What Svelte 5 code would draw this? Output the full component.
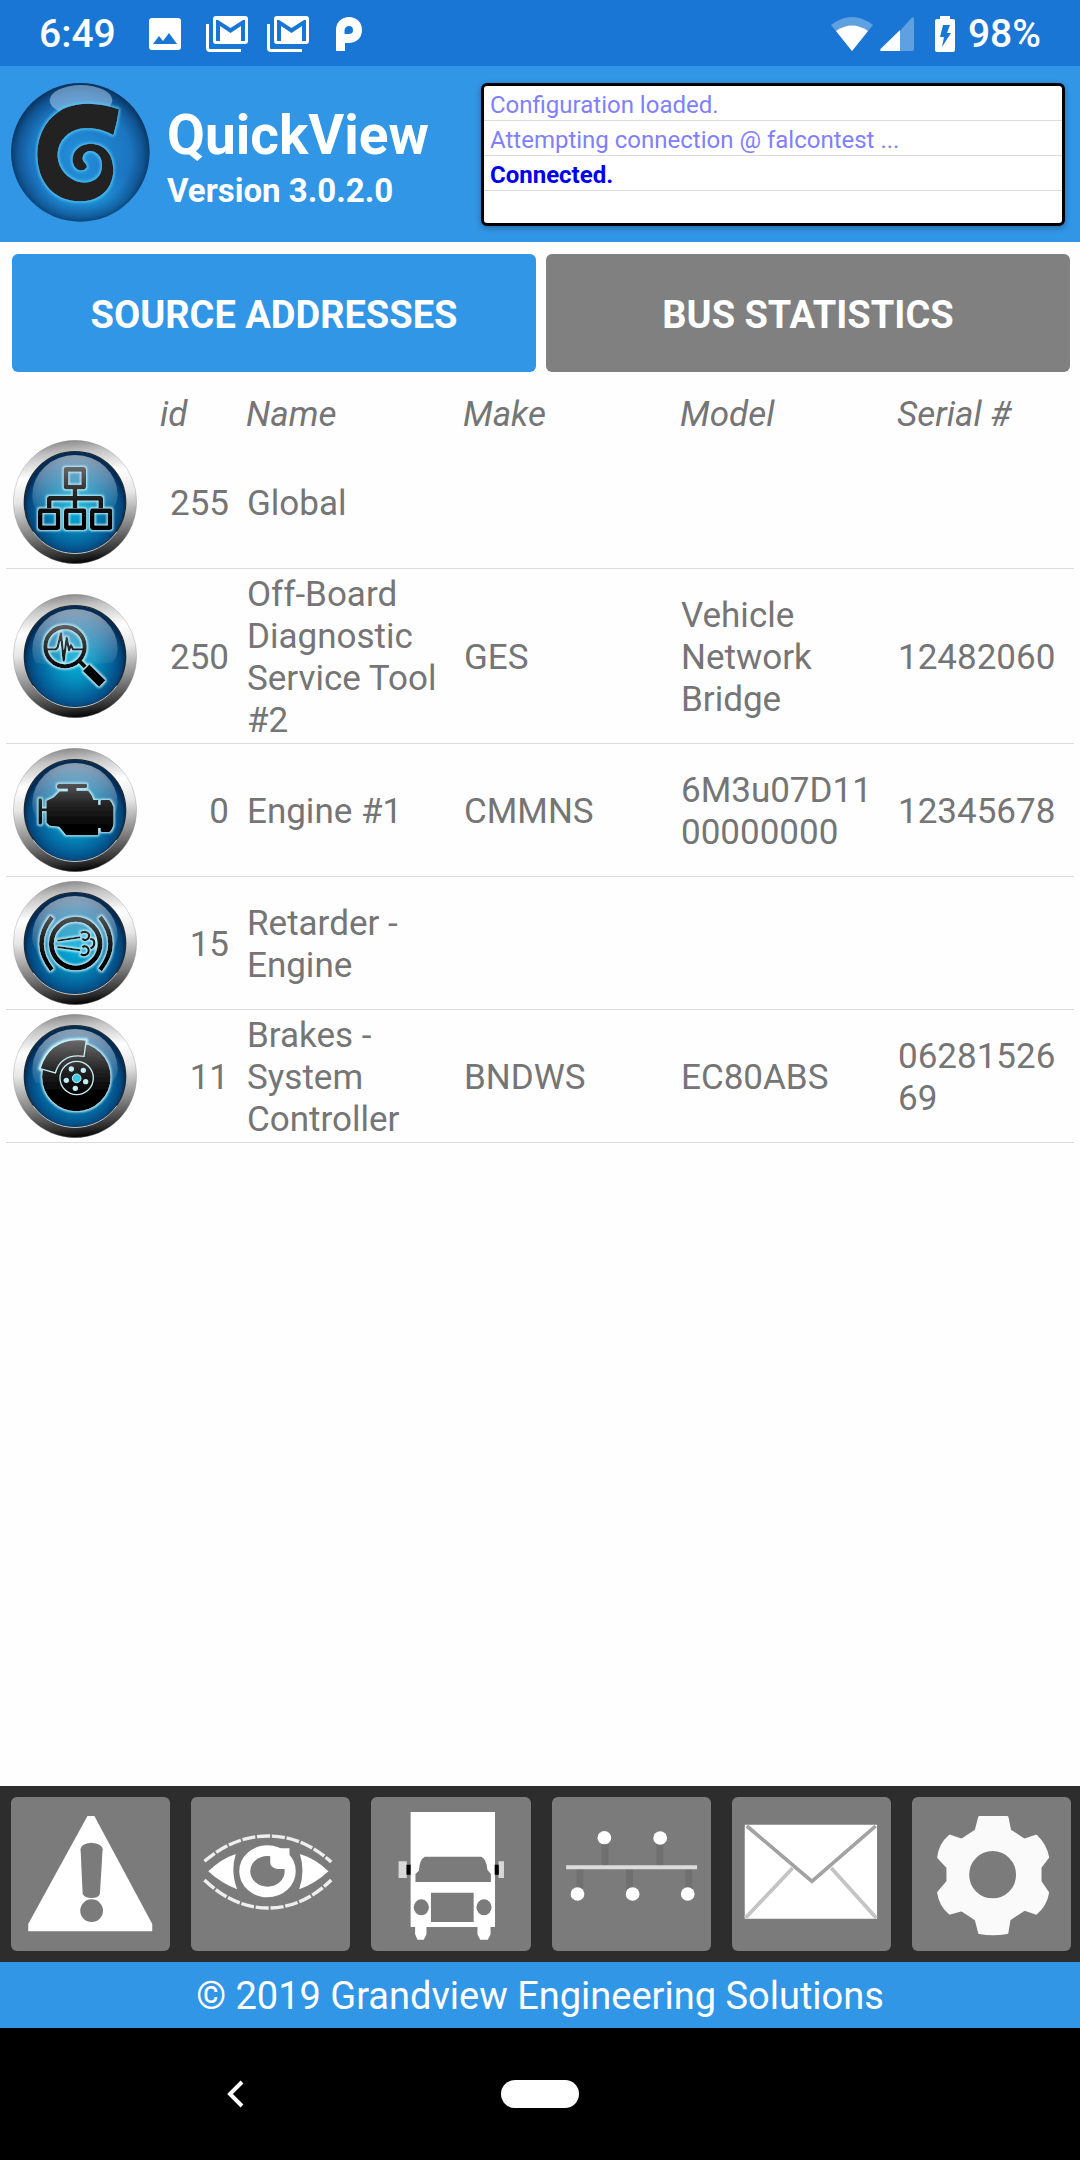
<script>
  const log = [
    { text: 'Configuration loaded.', current: false },
    { text: 'Attempting connection @ falcontest ...', current: false },
    { text: 'Connected.', current: true }
  ];

  const tabs = [
    { id: 'sources', label: 'SOURCE ADDRESSES' },
    { id: 'bus', label: 'BUS STATISTICS' }
  ];

  const sources = [
    { icon: 'network', id: 255, name: 'Global', make: '', model: '', serial: '' },
    {
      icon: 'tool',
      id: 250,
      name: 'Off-Board Diagnostic Service Tool #2',
      make: 'GES',
      model: 'Vehicle Network Bridge',
      serial: '12482060'
    },
    { icon: 'engine', id: 0, name: 'Engine #1', make: 'CMMNS', model: '6M3u07D1100000000', serial: '12345678' },
    { icon: 'retarder', id: 15, name: 'Retarder - Engine', make: '', model: '', serial: '' },
    { icon: 'brakes', id: 11, name: 'Brakes - System Controller', make: 'BNDWS', model: 'EC80ABS', serial: '0628152669' }
  ];

  const tools = [
    { id: 'faults', label: 'Faults', viewBox: '32 51 462 462' },
    { id: 'monitor', label: 'Monitor', viewBox: '558 51 462 462' },
    { id: 'vehicle', label: 'Vehicle', viewBox: '1080 51 462 462' },
    { id: 'bus', label: 'Network', viewBox: '35 51 462 462' },
    { id: 'mail', label: 'Messages', viewBox: '558 51 462 462' },
    { id: 'settings', label: 'Settings', viewBox: '1080 51 462 462' }
  ];

  let activeTab = 'sources';
</script>

<!-- shared gradients -->
<svg class="defs" aria-hidden="true">
  <defs>
    <linearGradient id="rim" x1="0.45" y1="0" x2="0.55" y2="1">
      <stop offset="0" stop-color="#8c8c8c" />
      <stop offset="0.1" stop-color="#c4c4c4" />
      <stop offset="0.28" stop-color="#ffffff" />
      <stop offset="0.46" stop-color="#e6e6e6" />
      <stop offset="0.75" stop-color="#7a7a7a" />
      <stop offset="0.92" stop-color="#303030" />
      <stop offset="1" stop-color="#000000" />
    </linearGradient>
    <radialGradient id="face" cx="0.5" cy="0.55" r="0.5">
      <stop offset="0" stop-color="#08b4dc" />
      <stop offset="0.4" stop-color="#058cbc" />
      <stop offset="0.75" stop-color="#045f98" />
      <stop offset="0.92" stop-color="#03447a" />
      <stop offset="1" stop-color="#022c56" />
    </radialGradient>
    <linearGradient id="shine" x1="0" y1="0" x2="0" y2="1">
      <stop offset="0" stop-color="#fff" stop-opacity="0.55" />
      <stop offset="1" stop-color="#fff" stop-opacity="0.05" />
    </linearGradient>
    <linearGradient id="ink" gradientUnits="userSpaceOnUse" x1="0" y1="70" x2="0" y2="240">
      <stop offset="0" stop-color="#707070" />
      <stop offset="0.6" stop-color="#222222" />
      <stop offset="1" stop-color="#000000" />
    </linearGradient>
    <filter id="glow" x="-20%" y="-20%" width="140%" height="140%">
      <feMorphology in="SourceAlpha" operator="dilate" radius="3" />
      <feGaussianBlur stdDeviation="3" result="soft" />
      <feFlood flood-color="#c4f4ff" />
      <feComposite in2="soft" operator="in" result="halo" />
      <feMerge>
        <feMergeNode in="halo" />
        <feMergeNode in="SourceGraphic" />
      </feMerge>
    </filter>
    <filter id="logo-glow" x="-20%" y="-20%" width="140%" height="140%">
      <feMorphology in="SourceAlpha" operator="dilate" radius="4" />
      <feGaussianBlur stdDeviation="5" result="soft" />
      <feFlood flood-color="#50c8f8" />
      <feComposite in2="soft" operator="in" result="halo" />
      <feMerge>
        <feMergeNode in="halo" />
        <feMergeNode in="SourceGraphic" />
      </feMerge>
    </filter>
    <radialGradient id="orb" cx="0.5" cy="0.52" r="0.52">
      <stop offset="0" stop-color="#2390dc" />
      <stop offset="0.7" stop-color="#1c74bf" />
      <stop offset="0.87" stop-color="#105694" />
      <stop offset="1" stop-color="#07305a" />
    </radialGradient>
    <radialGradient id="pool" cx="0.5" cy="0.5" r="0.5">
      <stop offset="0" stop-color="#1ec8ff" />
      <stop offset="1" stop-color="#1ea0e6" stop-opacity="0" />
    </radialGradient>
  </defs>
</svg>

<div class="screen">
  <div class="status-bar">
    <span class="clock">6:49</span>
    <div class="notifications">
      <svg width="32" height="34" viewBox="0 0 32 34">
        <path fill="#fff" fill-rule="evenodd" d="M3 1h26a3 3 0 0 1 3 3v26a3 3 0 0 1-3 3H3a3 3 0 0 1-3-3V4a3 3 0 0 1 3-3zM4 27h24l-8-11-6 8-4-5z" />
      </svg>
      {#each [1, 2] as n (n)}
        <svg width="42" height="36" viewBox="0 0 42 36">
          <path fill="none" stroke="#fff" stroke-width="3" d="M1.500 8v24q0 2.500 2.500 2.500h31" />
          <path fill="#fff" fill-rule="evenodd" d="M10 0h29a3 3 0 0 1 3 3v22a3 3 0 0 1-3 3H10a3 3 0 0 1-3-3V3a3 3 0 0 1 3-3zM10 4v21h4V10l10.500 7L35 10v15h4V4h-2L24.500 12 12 4z" />
        </svg>
      {/each}
      <svg width="28" height="36" viewBox="0 0 28 36">
        <path fill="#fff" fill-rule="evenodd" d="M1 35V14C1 6 7 1 14 1s13 5 13 13-6 13-13 13h-4v8zM14 10a4.500 4.500 0 0 0-4.500 4.500V18H14a4 4 0 0 0 0-8z" />
      </svg>
    </div>
    <div class="system">
      <svg width="42" height="34" viewBox="0 0 42 34">
        <path fill="#5fa0e0" d="M0 8Q21-8 42 8L21 34z" />
        <path fill="#fff" d="M5 14Q21 3 37 14L21 34z" />
      </svg>
      <svg width="34" height="34" viewBox="0 0 34 34">
        <path fill="#5fa0e0" d="M19 15 31.500 1Q34-1 34 2v30q0 2-2 2H19z" />
        <path fill="#fff" d="M20 13v21H1.500Q-1 34 1 31.500z" />
      </svg>
      <svg class="battery" width="20" height="36" viewBox="0 0 20 36">
        <path fill="#fff" fill-rule="evenodd" d="M5 0h10v3h3q2 0 2 2v29q0 2-2 2H2q-2 0-2-2V5q0-2 2-2h3zM8 9 5 21h4L7 31l9-14h-4l3-8z" />
      </svg>
      <span>98%</span>
    </div>
  </div>

  <header class="app-header">
    <svg class="logo" viewBox="18 18 417 417" aria-hidden="true">
      <circle cx="226" cy="226" r="208" fill="url(#orb)" />
      <ellipse cx="240" cy="350" rx="160" ry="80" fill="url(#pool)" opacity="0.5" />
      <ellipse cx="228" cy="70" rx="94" ry="46" fill="#a8cdf0" opacity="0.55" />
      <g filter="url(#logo-glow)">
        <path
          class="swirl"
          d="M342 97C290 78 225 72 175 95C120 125 95 180 97 240C100 320 150 373 225 373C290 373 326 330 325 275C323 225 293 200 256 200C215 202 198 232 204 258C210 282 235 288 246 270C244 256 232 256 233 243C235 225 252 218 267 224C290 233 298 265 285 292C270 318 232 325 200 305C165 285 152 245 160 215C170 178 203 156 238 154C270 152 300 160 325 175Q337 135 342 97z"
        />
      </g>
    </svg>
    <div class="app-title">
      <h1>QuickView</h1>
      <p>Version 3.0.2.0</p>
    </div>
    <ul class="log">
      {#each log as line (line.text)}
        <li class:current={line.current}>{line.text}</li>
      {/each}
    </ul>
  </header>

  <div class="tabs">
    {#each tabs as tab (tab.id)}
      <button class="tab" class:active={activeTab === tab.id} on:click={() => (activeTab = tab.id)}>
        {tab.label}
      </button>
    {/each}
  </div>

  <main>
    <table>
      <colgroup>
        <col class="col-icon" />
        <col class="col-id" />
        <col />
        <col />
        <col />
        <col class="col-serial" />
      </colgroup>
      <thead>
        <tr>
          <td></td>
          <th class="head-id">id</th>
          <th>Name</th>
          <th>Make</th>
          <th>Model</th>
          <th>Serial #</th>
        </tr>
      </thead>
      <tbody>
        {#each sources as source (source.id)}
          <tr>
            <td class="icon-cell">
              <svg class="badge" viewBox="0 0 372 372" aria-hidden="true">
                <circle cx="186" cy="186" r="185" fill="url(#rim)" stroke="#8a8a8a" stroke-width="1" />
                <circle cx="186" cy="187" r="152" fill="url(#face)" stroke="#1c2a34" stroke-width="4" />
                <path fill="none" stroke="#b9cbd6" stroke-width="3" d="M60 275A154 154 0 0 0 312 275" />
                <path fill="url(#shine)" d="M58 165A128 120 0 0 1 314 165Q312 195 296 206Q120 220 68 206Q58 190 58 165z" />
                <g filter="url(#glow)">
                  {#if source.icon === 'network'}
                    <g class="line" stroke-width="14" stroke-linejoin="round">
                      <rect x="159" y="88" width="53" height="53" />
                      <path d="M186 141v34M109 205v-30h154v30M186 175v30" />
                      <rect x="82" y="212" width="53" height="51" />
                      <rect x="160" y="212" width="53" height="51" />
                      <rect x="238" y="212" width="53" height="51" />
                    </g>
                  {:else if source.icon === 'tool'}
                    <g class="line">
                      <circle cx="156" cy="158" r="59" stroke-width="13" />
                      <path stroke-width="7" stroke-linejoin="round" d="M100 166h28l6-6 10-42 8 82 9-68 7 36 6-14 6 12h32" />
                      <path stroke-width="13" d="M197 199l20 20" />
                      <path stroke-width="28" d="M219 221l49 48" />
                    </g>
                  {:else if source.icon === 'engine'}
                    <path
                      fill="url(#ink)"
                      d="M136 107h82q4 0 4 4v5q0 4-4 4h-27v8h35q10 10 16 28h14v14h6v-11q0-3 4-3h24q8 8 12 22v50q-4 18-12 24h-24q-4 0-4-3v-9h-6v18q0 4-4 4h-93q-8-10-20-25l-30-4-9-9v-34h-13v36q0 4-4 4h-3q-4 0-4-4v-71q0-4 4-4h3q4 0 4 4v26h13v-23l22-10 18-18h24v-8h-28q-4 0-4-4v-5q0-4 4-4z"
                    />
                  {:else if source.icon === 'retarder'}
                    <g class="line">
                      <circle cx="188" cy="188" r="73" stroke-width="15" />
                      <path stroke-width="14" d="M117 108Q54 188 117 267M261 108Q324 188 261 267" />
                      <path stroke-width="6" d="M133 179l69-10M133 198l69 10" />
                      <path stroke-width="7" d="M203 156C216 148 230 155 228 166C226 178 212 180 208 172M208 199C216 192 228 198 227 210C225 222 212 226 203 219M231 175C247 170 249 196 232 202" />
                    </g>
                  {:else}
                    <circle cx="190" cy="189" r="103" fill="url(#ink)" />
                    <path fill="url(#ink)" stroke="#c5eef5" stroke-width="4" d="M81 164Q108 78 192 77Q210 76 220 78L213 127Q144 118 127 177z" />
                    <circle cx="191" cy="192" r="50" fill="none" stroke="#c5eef5" stroke-width="4" />
                    <g fill="#c5eef5">
                      <circle cx="175" cy="165" r="8" />
                      <circle cx="211" cy="169" r="8" />
                      <circle cx="218" cy="203" r="8" />
                      <circle cx="187" cy="223" r="8" />
                      <circle cx="160" cy="199" r="8" />
                    </g>
                    <circle cx="191" cy="193" r="13" fill="#3cc8e8" stroke="#c5eef5" stroke-width="3" />
                  {/if}
                </g>
              </svg>
            </td>
            <td class="id-cell">{source.id}</td>
            <td>{source.name}</td>
            <td>{source.make}</td>
            <td>{source.model}</td>
            <td>{source.serial}</td>
          </tr>
        {/each}
      </tbody>
    </table>
  </main>

  <nav class="toolbar">
    {#each tools as tool (tool.id)}
      <button class="tool" aria-label={tool.label}>
        <svg viewBox={tool.viewBox} preserveAspectRatio="none">
          {#if tool.id === 'faults'}
            <path fill="#fff" d="M254 108h20L442 432v22H82v-22z" />
            <path fill="#7b7b7b" d="M234 208q2-18 31-20 31 2 33 20l-8 134q-4 12-24 12t-26-12z" />
            <ellipse cx="266" cy="392" rx="33" ry="34" fill="#7b7b7b" />
          {:else if tool.id === 'monitor'}
            <g fill="none" stroke="#eee" stroke-width="10" stroke-dasharray="38 5">
              <path d="M597 244Q682 168 782 168T965 246" />
              <path d="M597 300Q682 384 782 384T965 300" />
            </g>
            <path fill="#fff" d="M608 274Q646 236 688 222Q672 274 692 328Q646 310 608 274zM957 274Q920 236 874 222Q890 274 872 328Q920 310 957 274z" />
            <ellipse cx="780" cy="274" rx="66" ry="62" fill="none" stroke="#fff" stroke-width="32" />
            <path fill="#fff" d="M788 205h56v62h-36q-20-4-20-20z" />
          {:else if tool.id === 'vehicle'}
            <path fill="#fff" d="M1195 96h245v345h-13v22l-8 16h-22l-8-16v-22h-148v22l-8 16h-18l-7-16v-22h-13z" />
            <path fill="#7b7b7b" d="M1236 230h164q16 8 18 40l10 12v24h-219v-24l10-10q2-36 17-42z" />
            <path fill="#7b7b7b" d="M1254 338h124v88h-124z" />
            <ellipse cx="1226" cy="382" rx="22" ry="24" fill="#7b7b7b" />
            <ellipse cx="1408" cy="382" rx="22" ry="24" fill="#7b7b7b" />
            <path fill="#d8d8d8" d="M1160 244h24v50h-24zM1450 244h16v50h-16z" />
            <path fill="#000" d="M1183 254h12v30h-12zM1439 254h12v30h-12z" />
          {:else if tool.id === 'bus'}
            <path stroke="#707070" stroke-width="20" d="M189 180v80M116 262v76M260 262v76M432 262v76M348 180v80" />
            <path stroke="#dcdcdc" stroke-width="12" d="M76 262h380" />
            <g fill="#fff">
              <circle cx="187" cy="173" r="20" />
              <circle cx="349" cy="174" r="20" />
              <circle cx="109" cy="342" r="20" />
              <circle cx="269" cy="342" r="20" />
              <circle cx="429" cy="342" r="20" />
            </g>
          {:else if tool.id === 'mail'}
            <path fill="#fff" d="M595 134h384v282H595z" />
            <g fill="none" stroke-width="11">
              <path stroke="#c4c4c4" d="M597 414L734 264M977 414L846 264" />
              <path stroke="#a2a2a2" d="M601 138L790 304L975 138" />
            </g>
          {:else}
            <path
              fill="#fafafa"
              fill-rule="evenodd"
              stroke="#fafafa"
              stroke-width="8"
              stroke-linejoin="round"
              d="M1276 112H1356L1364 152L1406 180L1440 168Q1468 196 1474 232L1452 262V305L1474 338Q1468 376 1440 400L1406 388L1362 418L1356 458Q1314 466 1276 458L1266 418L1224 390L1190 400Q1162 376 1157 338L1184 305V262L1157 232Q1162 192 1190 168L1224 180L1266 152zM1314 209A72 75 0 0 0 1314 359A72 75 0 0 0 1314 209z"
            />
          {/if}
        </svg>
      </button>
    {/each}
  </nav>

  <footer>© 2019 Grandview Engineering Solutions</footer>

  <div class="system-nav">
    <button class="back" aria-label="Back">
      <svg width="18" height="28" viewBox="0 0 18 28" fill="none" stroke="#fff" stroke-width="4">
        <path d="M16 2L4 14l12 12" />
      </svg>
    </button>
    <button class="home" aria-label="Home"></button>
  </div>
</div>

<style>
  :global(body) {
    margin: 0;
    background: #fefefe;
  }

  .defs {
    position: absolute;
    width: 0;
    height: 0;
  }

  .screen {
    display: flex;
    flex-direction: column;
    min-height: 100vh;
    font-family: Roboto, 'Liberation Sans', sans-serif;
    color: #757575;
  }

  button {
    border: none;
    padding: 0;
    font-family: inherit;
    cursor: pointer;
  }

  svg {
    display: block;
  }

  /* status bar */
  .status-bar {
    display: flex;
    align-items: center;
    box-sizing: border-box;
    height: 66px;
    padding: 2px 39px 0;
    background: #1a76d4;
    color: #fff;
    font-size: 39px;
    font-weight: 500;
  }

  .notifications {
    display: flex;
    align-items: center;
    gap: 19px;
    margin-left: 33px;
  }

  .notifications svg:first-child {
    margin-right: 6px;
  }

  .notifications svg:last-child {
    margin-left: 7px;
  }

  .system {
    display: flex;
    align-items: center;
    gap: 7px;
    margin-left: auto;
  }

  .battery {
    margin: 0 6px 0 14px;
  }

  /* header */
  .app-header {
    display: flex;
    align-items: flex-start;
    box-sizing: border-box;
    height: 176px;
    padding: 17px 15px 0 11px;
    background: #3296e6;
    color: #fff;
  }

  .logo {
    flex-shrink: 0;
    width: 139px;
    height: 139px;
  }

  .swirl {
    fill: #242424;
  }

  .app-title {
    flex: 0 0 314px;
    padding: 20px 0 0 17px;
  }

  h1 {
    margin: 0;
    font-size: 55px;
    line-height: 64px;
    font-weight: 700;
  }

  .app-title p {
    margin: 4px 0 0;
    font-size: 33px;
    line-height: 40px;
    font-weight: 700;
  }

  .log {
    flex: 1;
    box-sizing: border-box;
    height: 143px;
    margin: 0;
    padding: 0;
    list-style: none;
    background: #fff;
    border: 3px solid #000;
    border-radius: 6px;
    box-shadow: 0 2px 6px rgba(0, 0, 0, 0.3);
  }

  .log li {
    box-sizing: border-box;
    height: 35px;
    padding-left: 6px;
    border-bottom: 1px solid #dcdcdc;
    color: #8080ff;
    font-size: 24px;
    line-height: 38px;
    white-space: nowrap;
  }

  .log li.current {
    color: #0000f0;
    font-weight: 700;
  }

  /* tabs */
  .tabs {
    display: grid;
    grid-template-columns: 1fr 1fr;
    gap: 10px;
    padding: 12px 10px 0 12px;
  }

  .tab {
    height: 118px;
    padding-top: 4px;
    border-radius: 6px;
    background: #808080;
    color: #fff;
    font-size: 38px;
    font-weight: 700;
  }

  .tab.active {
    background: #3296e6;
  }

  /* source list */
  main {
    flex: 1;
    padding: 18px 6px 0;
  }

  table {
    width: 100%;
    table-layout: fixed;
    border-collapse: collapse;
    font-size: 35px;
    line-height: 42px;
  }

  .col-icon {
    width: 138px;
  }

  .col-id {
    width: 91px;
  }

  .col-serial {
    width: 188px;
  }

  th {
    padding: 4px 0 0 11px;
    font-weight: 400;
    font-style: italic;
    text-align: left;
  }

  th.head-id {
    padding-left: 16px;
  }

  tbody td {
    padding: 5px 6px 1px 12px;
    overflow-wrap: anywhere;
    vertical-align: middle;
  }

  tbody tr {
    border-bottom: 1px solid #dcdcdc;
  }

  tbody td.icon-cell {
    padding: 4px 7px;
  }

  tbody td.id-cell {
    padding: 5px 6px 1px 0;
    text-align: right;
  }

  .badge {
    width: 124px;
    height: 124px;
  }

  .line {
    fill: none;
    stroke: url(#ink);
  }

  /* bottom toolbar */
  .toolbar {
    display: grid;
    grid-template-columns: repeat(6, 1fr);
    gap: 21px;
    padding: 11px 9px 11px 11px;
    background: #2d2d2d;
  }

  .tool {
    height: 154px;
    border-radius: 6px;
    background: #7b7b7b;
  }

  .tool svg {
    width: 100%;
    height: 100%;
  }

  footer {
    padding-top: 2px;
    background: #3296e6;
    color: #fff;
    font-size: 38px;
    line-height: 64px;
    text-align: center;
  }

  .system-nav {
    display: grid;
    grid-template-columns: 1fr 78px 1fr;
    align-items: center;
    height: 132px;
    background: #000;
  }

  .back {
    justify-self: center;
    padding: 20px 30px;
    margin-right: 32px;
    background: transparent;
  }

  .home {
    height: 28px;
    border-radius: 14px;
    background: #fff;
  }
</style>
